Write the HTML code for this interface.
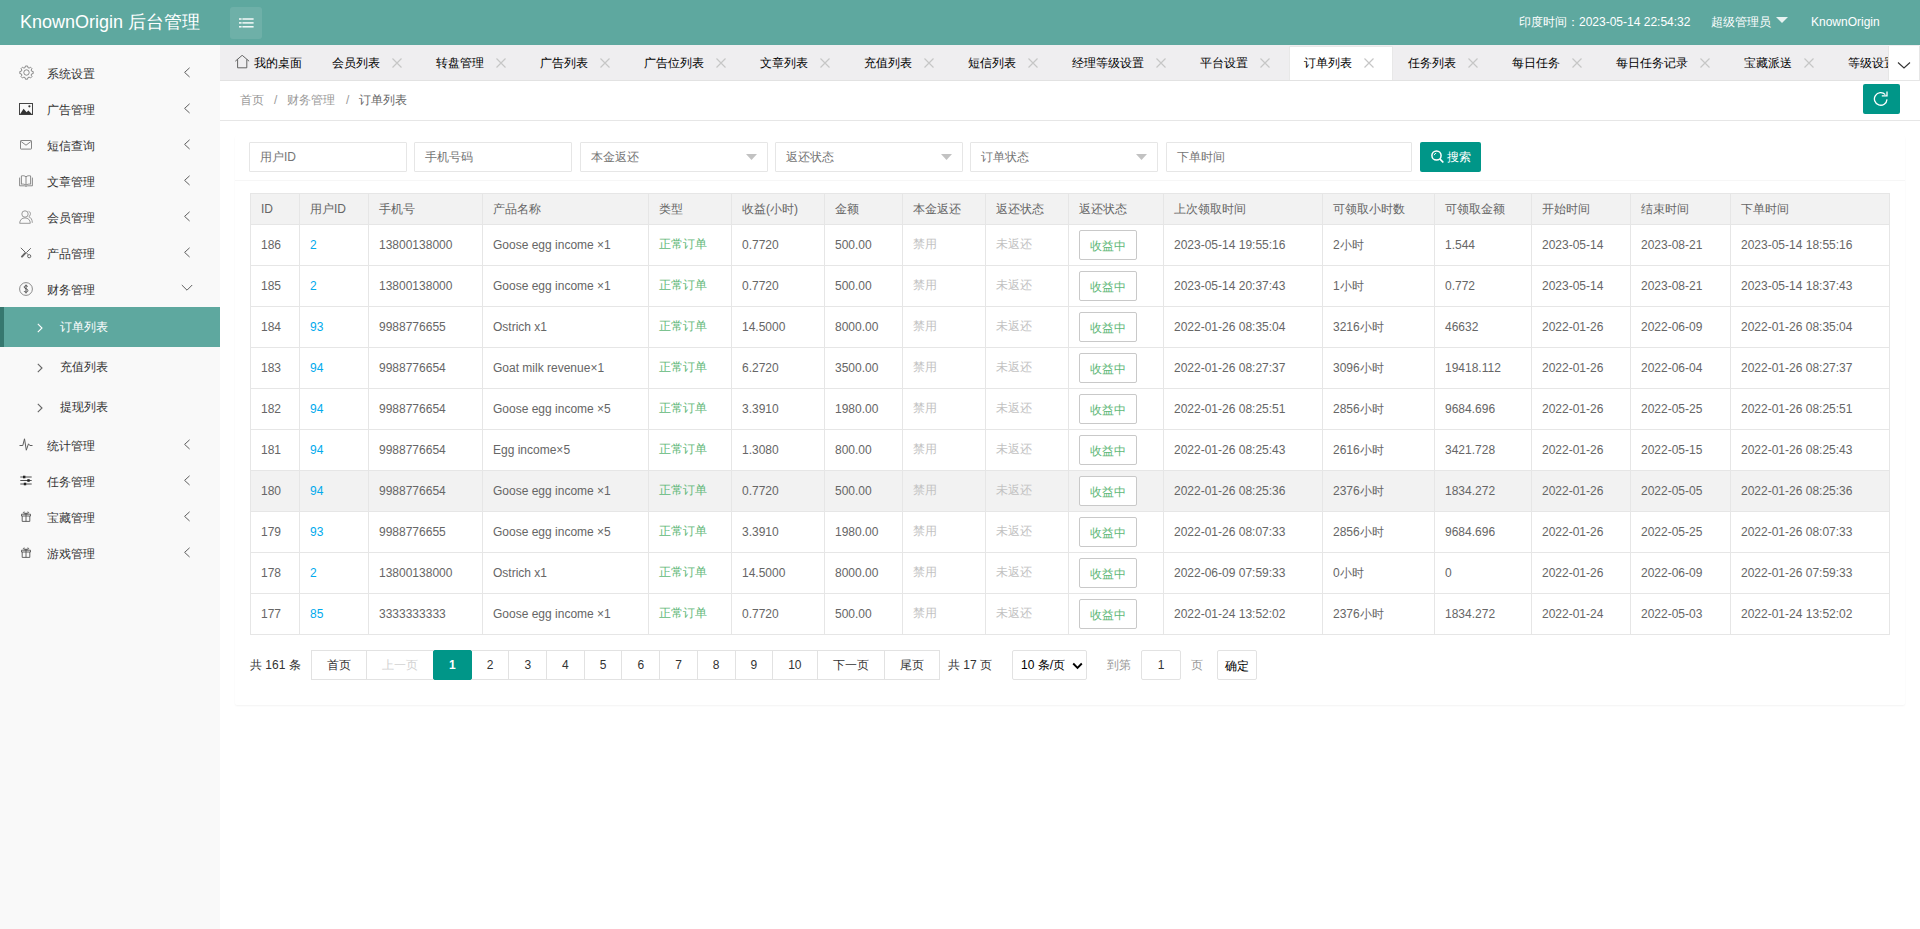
<!DOCTYPE html>
<html><head><meta charset="utf-8">
<style>
*{box-sizing:border-box;margin:0;padding:0}
html,body{width:1920px;height:929px;overflow:hidden;background:#fff;font-family:"Liberation Sans",sans-serif;font-size:12px;color:#666}
.abs{position:absolute}
#hdr{position:absolute;left:0;top:0;width:1920px;height:45px;background:#5ea89f}
#logo{position:absolute;left:20px;top:0;line-height:45px;font-size:18px;color:#fff;white-space:nowrap}
#tog{position:absolute;left:230px;top:7px;width:32px;height:32px;border-radius:3px;background:rgba(255,255,255,.1)}
#htime{position:absolute;left:1519px;top:0;line-height:45px;color:#fff;white-space:nowrap}
#hadm{position:absolute;left:1711px;top:0;line-height:45px;color:#fff;white-space:nowrap}
#hko{position:absolute;left:1811px;top:0;line-height:45px;color:#fff;white-space:nowrap}
#side{position:absolute;left:0;top:45px;width:220px;height:884px;background:#f9f9f9}
.mi{position:absolute;left:0;width:220px;height:36px;line-height:36px;color:#333;white-space:nowrap}
.mi .t{position:absolute;left:47px;top:1px}
.mi svg.ic{position:absolute;left:19px}
.mi .chev{position:absolute;left:183px;top:12px;width:8px;height:11px}
.si{position:absolute;left:0;width:220px;height:40px;line-height:40px;color:#333;white-space:nowrap}
.si .t{position:absolute;left:60px;top:0}
.si svg{position:absolute;left:37px;top:16px}
.si.on{background:#5ea89f;color:#fff}
.si.on:before{content:"";position:absolute;left:0;top:0;width:4px;height:40px;background:#36786f}
#tabs{position:absolute;left:220px;top:45px;width:1700px;height:36px;background:#efeef0;border-bottom:1px solid #e2e2e2;overflow:hidden}
.tab{position:absolute;top:0;height:35px;line-height:36px;color:#000;white-space:nowrap}
.tab.on{background:#fff;top:1px;height:34px;line-height:32px;border:1px solid #e8e8e8;border-bottom:none}
.tab .x{position:absolute;top:13px;width:10px;height:10px}
#tabdd{position:absolute;left:1888px;top:46px;width:32px;height:35px;background:#fff;border:1px solid #e6e6e6;border-top:none}
#bc{position:absolute;left:220px;top:81px;width:1700px;height:40px;border-bottom:1px solid #e6e6e6;background:#fff}
#bc span{position:absolute;top:0;line-height:38px;white-space:nowrap}
#refresh{position:absolute;left:1863px;top:84px;width:37px;height:30px;background:#009688;border-radius:2px}

.inp{position:absolute;top:142px;height:30px;border:1px solid #e6e6e6;border-radius:1px;background:#fff}
.inp span{position:absolute;left:10px;top:0;line-height:28px;color:#757575;white-space:nowrap}
#sbtn{position:absolute;left:1420px;top:142px;width:61px;height:30px;background:#009688;border-radius:2px;color:#fff}
#sbtn span{position:absolute;left:27px;top:0;line-height:30px}
.hl{position:absolute;left:250px;width:1640px;height:1px;background:#e6e6e6}
.vl{position:absolute;top:193px;width:1px;height:442px;background:#e6e6e6}
.th{position:absolute;top:193px;line-height:31px;color:#666;white-space:nowrap}
.td{position:absolute;line-height:41px;color:#666;white-space:nowrap}
.lk{color:#01aaed}.gr{color:#5fb878}.lt{color:#c2c2c2}
.rbtn{position:absolute;width:58px;height:30px;line-height:30px;border:1px solid #c9c9c9;border-radius:2px;background:#fff;color:#5fb878;text-align:center;white-space:nowrap}
.pg{position:absolute;top:650px;height:30px;line-height:28px;border:1px solid #e2e2e2;background:#fff;color:#333;text-align:center;white-space:nowrap}
#pager{position:absolute;left:311px;top:650px;height:30px;display:flex;white-space:nowrap}
#pager .p{display:block;height:30px;line-height:28px;padding:0 15px;border:1px solid #e2e2e2;margin-right:-1px;color:#333;background:#fff}
#pager .p.dis{color:#d2d2d2}
#pager .p.cur{background:#009688;border-color:#009688;color:#fff;border-radius:2px;font-weight:bold;position:relative}
#limit{position:absolute;left:1012px;top:650px;width:75px;height:30px;line-height:28px;border:1px solid #e2e2e2;border-radius:2px;color:#000;padding-left:8px;white-space:nowrap;background:#fff}
#skipinp{position:absolute;left:1141px;top:650px;width:40px;height:30px;line-height:28px;border:1px solid #e2e2e2;border-radius:2px;text-align:center;color:#333}
#skipbtn{position:absolute;left:1217px;top:650px;width:40px;height:30px;line-height:30px;border:1px solid #e2e2e2;border-radius:2px;text-align:center;color:#000}
</style></head><body>
<div id="hdr">
  <div id="logo">KnownOrigin 后台管理</div>
  <div id="tog"><svg class="abs" style="left:9px;top:11px" width="15" height="10" viewBox="0 0 15 10"><g fill="#fff"><rect x="0" y="0.3" width="2.6" height="1.4"/><rect x="3.4" y="0.3" width="11.2" height="1.4"/><rect x="0" y="4.2" width="2.6" height="1.4"/><rect x="3.4" y="4.2" width="11.2" height="1.4"/><rect x="0" y="8.1" width="2.6" height="1.4"/><rect x="3.4" y="8.1" width="11.2" height="1.4"/></g></svg></div>
  <div id="htime">印度时间：2023-05-14 22:54:32</div>
  <div id="hadm">超级管理员</div>
  <svg class="abs" style="left:1776px;top:17px" width="12" height="6" viewBox="0 0 12 6"><path d="M0 0H12L6 6Z" fill="#fff" fill-opacity="0.85"/></svg>
  <div id="hko">KnownOrigin</div>
</div>
<div id="side"></div>
<div class="mi" style="top:55px"><svg class="ic" style="top:10px" width="15" height="15" viewBox="0 0 15 15"><path d="M6.4 1H8.6L8.9 2.6L10.1 3.1L11.5 2.2L13 3.7L12.1 5L12.6 6.2L14.2 6.5V8.6L12.6 8.9L12.1 10.1L13 11.5L11.5 13L10.1 12.1L8.9 12.6L8.6 14.2H6.4L6.1 12.6L4.9 12.1L3.5 13L2 11.5L2.9 10.1L2.4 8.9L0.8 8.6V6.5L2.4 6.2L2.9 5L2 3.7L3.5 2.2L4.9 3.1L6.1 2.6Z" fill="none" stroke="#777" stroke-width="0.85"/><circle cx="7.5" cy="7.5" r="2.7" fill="none" stroke="#777" stroke-width="0.85"/></svg><span class="t">系统设置</span><svg class="chev" viewBox="0 0 8 11"><path d="M6.6 0.8L1.6 5.4L6.6 10" fill="none" stroke="#555" stroke-width="0.95"/></svg></div>
<div class="mi" style="top:91px"><svg class="ic" style="top:12px" width="14" height="12" viewBox="0 0 14 12"><rect x="0.5" y="0.5" width="13" height="11" fill="none" stroke="#444" stroke-width="1"/><path d="M1 11.2L4.6 5.8L7.6 9.2L9.4 7.4L13 11.2Z" fill="#333"/><circle cx="10.4" cy="3.3" r="1.1" fill="#333"/></svg><span class="t">广告管理</span><svg class="chev" viewBox="0 0 8 11"><path d="M6.6 0.8L1.6 5.4L6.6 10" fill="none" stroke="#555" stroke-width="0.95"/></svg></div>
<div class="mi" style="top:127px"><svg class="ic" style="left:20px;top:13px" width="12" height="10" viewBox="0 0 12 10"><rect x="0.5" y="0.5" width="11" height="8.6" rx="0.6" fill="none" stroke="#777" stroke-width="0.9"/><path d="M1.2 1.6L6 5.2L10.8 1.6" fill="none" stroke="#777" stroke-width="0.9"/></svg><span class="t">短信查询</span><svg class="chev" viewBox="0 0 8 11"><path d="M6.6 0.8L1.6 5.4L6.6 10" fill="none" stroke="#555" stroke-width="0.95"/></svg></div>
<div class="mi" style="top:163px"><svg class="ic" style="top:12px" width="14" height="12" viewBox="0 0 14 12"><path d="M7 1.8C5.6 0.6 3.8 0.5 2.4 0.9V9.2C3.8 8.9 5.6 9.1 7 10.2C8.4 9.1 10.2 8.9 11.6 9.2V0.9C10.2 0.5 8.4 0.6 7 1.8ZM7 1.8V10.2" fill="none" stroke="#777" stroke-width="0.85"/><path d="M0.6 2.6V10.8H5.4L7 11.4L8.6 10.8H13.4V2.6" fill="none" stroke="#777" stroke-width="0.85"/></svg><span class="t">文章管理</span><svg class="chev" viewBox="0 0 8 11"><path d="M6.6 0.8L1.6 5.4L6.6 10" fill="none" stroke="#555" stroke-width="0.95"/></svg></div>
<div class="mi" style="top:199px"><svg class="ic" style="top:11px" width="14" height="14" viewBox="0 0 14 14"><circle cx="6" cy="4" r="3.2" fill="none" stroke="#888" stroke-width="0.85"/><path d="M0.7 13.3C0.7 9.9 3 7.9 6 7.9C9 7.9 11.3 9.9 11.3 13.3Z" fill="none" stroke="#888" stroke-width="0.85"/><path d="M9.6 1.3C11.2 1.8 11.7 3.3 11.3 4.6C11.1 5.5 10.5 6.3 9.8 6.7C11.9 7.5 13.3 9.6 13.3 12.8" fill="none" stroke="#888" stroke-width="0.85"/></svg><span class="t">会员管理</span><svg class="chev" viewBox="0 0 8 11"><path d="M6.6 0.8L1.6 5.4L6.6 10" fill="none" stroke="#555" stroke-width="0.95"/></svg></div>
<div class="mi" style="top:235px"><svg class="ic" style="left:20px;top:12px" width="12" height="12" viewBox="0 0 12 12"><path d="M0.8 0.8L5.6 5.6" stroke="#666" stroke-width="1"/><path d="M5 6.4L2 9.6" stroke="#666" stroke-width="2" stroke-linecap="round"/><path d="M10.8 1.2L6.4 5.6L7.8 7.6" stroke="#666" stroke-width="1" fill="none"/><circle cx="9.2" cy="9.2" r="1.6" fill="none" stroke="#666" stroke-width="1"/></svg><span class="t">产品管理</span><svg class="chev" viewBox="0 0 8 11"><path d="M6.6 0.8L1.6 5.4L6.6 10" fill="none" stroke="#555" stroke-width="0.95"/></svg></div>
<div class="mi" style="top:271px"><svg class="ic" style="top:11px" width="14" height="14" viewBox="0 0 14 14"><circle cx="7" cy="7" r="6.4" fill="none" stroke="#777" stroke-width="0.85"/><path d="M8.8 4.6C8.5 4 7.8 3.7 7 3.7C6 3.7 5.2 4.2 5.2 5.1C5.2 7 8.9 6.3 8.9 8.6C8.9 9.6 8 10.2 7 10.2C6 10.2 5.3 9.8 5 9.1M7 2.6V11.4" fill="none" stroke="#555" stroke-width="1"/></svg><span class="t">财务管理</span><svg class="chev" style="left:181px;top:13px;width:12px;height:8px" viewBox="0 0 12 8"><path d="M0.8 1L6 6.2L11.2 1" fill="none" stroke="#555" stroke-width="0.95"/></svg></div>
<div class="mi" style="top:427px"><svg class="ic" style="top:11px" width="14" height="14" viewBox="0 0 14 14"><path d="M0.5 7.5H3.8L5.5 0.8L7.3 12.2L9.5 5.8L10.8 7.5H13.5" fill="none" stroke="#555" stroke-width="0.95"/></svg><span class="t">统计管理</span><svg class="chev" viewBox="0 0 8 11"><path d="M6.6 0.8L1.6 5.4L6.6 10" fill="none" stroke="#555" stroke-width="0.95"/></svg></div>
<div class="mi" style="top:463px"><svg class="ic" style="left:20px;top:12px" width="12" height="12" viewBox="0 0 12 12"><path d="M0.3 2H11.7M0.3 5.5H11.7M0.3 9H11.7" stroke="#444" stroke-width="0.95"/><rect x="3" y="0.7" width="2.4" height="2.6" fill="#222"/><rect x="7.3" y="4.2" width="2.4" height="2.6" fill="#222"/><rect x="3.8" y="7.7" width="2.4" height="2.6" fill="#222"/></svg><span class="t">任务管理</span><svg class="chev" viewBox="0 0 8 11"><path d="M6.6 0.8L1.6 5.4L6.6 10" fill="none" stroke="#555" stroke-width="0.95"/></svg></div>
<div class="mi" style="top:499px"><svg class="ic" style="left:21px;top:12px" width="10" height="11" viewBox="0 0 10 11"><path d="M0.5 3.2H9.5V5H0.5Z" fill="none" stroke="#555" stroke-width="0.9"/><path d="M1.2 5V10.4H8.8V5M5 3.2V10.4" fill="none" stroke="#555" stroke-width="0.9"/><path d="M5 3C4.2 1 2.6 0.6 2.4 1.4C2.2 2.3 3.6 2.9 5 3C6.4 2.9 7.8 2.3 7.6 1.4C7.4 0.6 5.8 1 5 3" fill="none" stroke="#555" stroke-width="0.85"/></svg><span class="t">宝藏管理</span><svg class="chev" viewBox="0 0 8 11"><path d="M6.6 0.8L1.6 5.4L6.6 10" fill="none" stroke="#555" stroke-width="0.95"/></svg></div>
<div class="mi" style="top:535px"><svg class="ic" style="left:21px;top:12px" width="10" height="11" viewBox="0 0 10 11"><path d="M0.5 3.2H9.5V5H0.5Z" fill="none" stroke="#555" stroke-width="0.9"/><path d="M1.2 5V10.4H8.8V5M5 3.2V10.4" fill="none" stroke="#555" stroke-width="0.9"/><path d="M5 3C4.2 1 2.6 0.6 2.4 1.4C2.2 2.3 3.6 2.9 5 3C6.4 2.9 7.8 2.3 7.6 1.4C7.4 0.6 5.8 1 5 3" fill="none" stroke="#555" stroke-width="0.85"/></svg><span class="t">游戏管理</span><svg class="chev" viewBox="0 0 8 11"><path d="M6.6 0.8L1.6 5.4L6.6 10" fill="none" stroke="#555" stroke-width="0.95"/></svg></div>
<div class="si on" style="top:307px"><svg width="6" height="10" viewBox="0 0 6 10"><path d="M0.8 0.8L5 5L0.8 9.2" fill="none" stroke="#fff" stroke-width="1.1"/></svg><span class="t">订单列表</span></div>
<div class="si" style="top:347px"><svg width="6" height="10" viewBox="0 0 6 10"><path d="M0.8 0.8L5 5L0.8 9.2" fill="none" stroke="#666" stroke-width="1.1"/></svg><span class="t">充值列表</span></div>
<div class="si" style="top:387px"><svg width="6" height="10" viewBox="0 0 6 10"><path d="M0.8 0.8L5 5L0.8 9.2" fill="none" stroke="#666" stroke-width="1.1"/></svg><span class="t">提现列表</span></div>
<div id="tabs">
<div class="tab" style="left:16px"><svg class="abs" style="left:-1px;top:10px" width="15" height="14" viewBox="0 0 15 14"><path d="M0.3 6.2L7.2 0.3L14.1 6.2M2.6 4.4V12.8H11.8V4.4" fill="none" stroke="#555" stroke-width="0.9"/></svg><span class="abs" style="left:18px">我的桌面</span></div>
<div class="tab" style="left:112px;width:98px"><span class="abs" style="left:0">会员列表</span><svg class="x" style="left:60px" viewBox="0 0 10 10"><path d="M0.5 0.5L9.5 9.5M9.5 0.5L0.5 9.5" stroke="#c6c6c6" stroke-width="1.15"/></svg></div>
<div class="tab" style="left:216px;width:98px"><span class="abs" style="left:0">转盘管理</span><svg class="x" style="left:60px" viewBox="0 0 10 10"><path d="M0.5 0.5L9.5 9.5M9.5 0.5L0.5 9.5" stroke="#c6c6c6" stroke-width="1.15"/></svg></div>
<div class="tab" style="left:320px;width:98px"><span class="abs" style="left:0">广告列表</span><svg class="x" style="left:60px" viewBox="0 0 10 10"><path d="M0.5 0.5L9.5 9.5M9.5 0.5L0.5 9.5" stroke="#c6c6c6" stroke-width="1.15"/></svg></div>
<div class="tab" style="left:424px;width:110px"><span class="abs" style="left:0">广告位列表</span><svg class="x" style="left:72px" viewBox="0 0 10 10"><path d="M0.5 0.5L9.5 9.5M9.5 0.5L0.5 9.5" stroke="#c6c6c6" stroke-width="1.15"/></svg></div>
<div class="tab" style="left:540px;width:98px"><span class="abs" style="left:0">文章列表</span><svg class="x" style="left:60px" viewBox="0 0 10 10"><path d="M0.5 0.5L9.5 9.5M9.5 0.5L0.5 9.5" stroke="#c6c6c6" stroke-width="1.15"/></svg></div>
<div class="tab" style="left:644px;width:98px"><span class="abs" style="left:0">充值列表</span><svg class="x" style="left:60px" viewBox="0 0 10 10"><path d="M0.5 0.5L9.5 9.5M9.5 0.5L0.5 9.5" stroke="#c6c6c6" stroke-width="1.15"/></svg></div>
<div class="tab" style="left:748px;width:98px"><span class="abs" style="left:0">短信列表</span><svg class="x" style="left:60px" viewBox="0 0 10 10"><path d="M0.5 0.5L9.5 9.5M9.5 0.5L0.5 9.5" stroke="#c6c6c6" stroke-width="1.15"/></svg></div>
<div class="tab" style="left:852px;width:122px"><span class="abs" style="left:0">经理等级设置</span><svg class="x" style="left:84px" viewBox="0 0 10 10"><path d="M0.5 0.5L9.5 9.5M9.5 0.5L0.5 9.5" stroke="#c6c6c6" stroke-width="1.15"/></svg></div>
<div class="tab" style="left:980px;width:98px"><span class="abs" style="left:0">平台设置</span><svg class="x" style="left:60px" viewBox="0 0 10 10"><path d="M0.5 0.5L9.5 9.5M9.5 0.5L0.5 9.5" stroke="#c6c6c6" stroke-width="1.15"/></svg></div>
<div class="tab on" style="left:1069px;width:104px"><span class="abs" style="left:14px;top:0">订单列表</span><svg class="x" style="left:74px;top:11px" viewBox="0 0 10 10"><path d="M0.5 0.5L9.5 9.5M9.5 0.5L0.5 9.5" stroke="#c6c6c6" stroke-width="1.15"/></svg></div>
<div class="tab" style="left:1188px;width:98px"><span class="abs" style="left:0">任务列表</span><svg class="x" style="left:60px" viewBox="0 0 10 10"><path d="M0.5 0.5L9.5 9.5M9.5 0.5L0.5 9.5" stroke="#c6c6c6" stroke-width="1.15"/></svg></div>
<div class="tab" style="left:1292px;width:98px"><span class="abs" style="left:0">每日任务</span><svg class="x" style="left:60px" viewBox="0 0 10 10"><path d="M0.5 0.5L9.5 9.5M9.5 0.5L0.5 9.5" stroke="#c6c6c6" stroke-width="1.15"/></svg></div>
<div class="tab" style="left:1396px;width:122px"><span class="abs" style="left:0">每日任务记录</span><svg class="x" style="left:84px" viewBox="0 0 10 10"><path d="M0.5 0.5L9.5 9.5M9.5 0.5L0.5 9.5" stroke="#c6c6c6" stroke-width="1.15"/></svg></div>
<div class="tab" style="left:1524px;width:98px"><span class="abs" style="left:0">宝藏派送</span><svg class="x" style="left:60px" viewBox="0 0 10 10"><path d="M0.5 0.5L9.5 9.5M9.5 0.5L0.5 9.5" stroke="#c6c6c6" stroke-width="1.15"/></svg></div>
<div class="tab" style="left:1628px;width:98px"><span class="abs" style="left:0">等级设置</span><svg class="x" style="left:60px" viewBox="0 0 10 10"><path d="M0.5 0.5L9.5 9.5M9.5 0.5L0.5 9.5" stroke="#c6c6c6" stroke-width="1.15"/></svg></div>
</div>
<div id="tabdd"><svg class="abs" style="left:8px;top:15px" width="14" height="9" viewBox="0 0 14 9"><path d="M1 1.5L7 7L13 1.5" stroke="#333" stroke-width="1.1" fill="none"/></svg></div>
<div id="bc"><span style="left:20px;color:#999">首页</span><span style="left:54px;color:#999">/</span><span style="left:67px;color:#999">财务管理</span><span style="left:126px;color:#999">/</span><span style="left:139px;color:#666">订单列表</span></div>
<div id="refresh"><svg class="abs" style="left:10px;top:6px" width="16" height="16" viewBox="0 0 16 16"><path d="M14 9.4A6.3 6.3 0 1 1 12.3 4.6" stroke="#fff" stroke-width="1.3" fill="none"/><path d="M8.8 5.9H14V1.6" stroke="#fff" stroke-width="1.3" fill="none"/></svg></div>
<!--CONTENT-->
<div id="card" style="position:absolute;left:235px;top:136px;width:1670px;height:569px;background:#fff;border-radius:2px;box-shadow:0 1px 2px 0 rgba(0,0,0,.05)"></div>
<div style="position:absolute;left:235px;top:180px;width:1670px;height:1px;background:#f6f6f6"></div>
<div class="inp" style="left:249px;width:158px"><span>用户ID</span></div>
<div class="inp" style="left:414px;width:158px"><span>手机号码</span></div>
<div class="inp" style="left:580px;width:188px"><span>本金返还</span><svg class="abs" style="left:165px;top:11px" width="11" height="6" viewBox="0 0 11 6"><path d="M0 0H11L5.5 6Z" fill="#c2c2c2"/></svg></div>
<div class="inp" style="left:775px;width:188px"><span>返还状态</span><svg class="abs" style="left:165px;top:11px" width="11" height="6" viewBox="0 0 11 6"><path d="M0 0H11L5.5 6Z" fill="#c2c2c2"/></svg></div>
<div class="inp" style="left:970px;width:188px"><span>订单状态</span><svg class="abs" style="left:165px;top:11px" width="11" height="6" viewBox="0 0 11 6"><path d="M0 0H11L5.5 6Z" fill="#c2c2c2"/></svg></div>
<div class="inp" style="left:1166px;width:246px"><span>下单时间</span></div>
<div id="sbtn"><svg class="abs" style="left:11px;top:8px" width="13" height="14" viewBox="0 0 13 14"><circle cx="5.5" cy="5.5" r="4.6" fill="none" stroke="#fff" stroke-width="1.5"/><path d="M8.8 8.8L12.3 12.5" stroke="#fff" stroke-width="1.7"/><path d="M3.2 5.2A2.4 2.4 0 0 1 5.2 3.2" stroke="#fff" stroke-width="0.9" fill="none"/></svg><span>搜索</span></div>
<div style="position:absolute;left:250px;top:193px;width:1640px;height:31px;background:#f2f2f2"></div>
<div style="position:absolute;left:250px;top:470px;width:1640px;height:41px;background:#f2f2f2"></div>
<div class="hl" style="top:193px"></div>
<div class="hl" style="top:224px"></div>
<div class="hl" style="top:265px"></div>
<div class="hl" style="top:306px"></div>
<div class="hl" style="top:347px"></div>
<div class="hl" style="top:388px"></div>
<div class="hl" style="top:429px"></div>
<div class="hl" style="top:470px"></div>
<div class="hl" style="top:511px"></div>
<div class="hl" style="top:552px"></div>
<div class="hl" style="top:593px"></div>
<div class="hl" style="top:634px"></div>
<div class="vl" style="left:250px"></div>
<div class="vl" style="left:299px"></div>
<div class="vl" style="left:368px"></div>
<div class="vl" style="left:482px"></div>
<div class="vl" style="left:648px"></div>
<div class="vl" style="left:731px"></div>
<div class="vl" style="left:824px"></div>
<div class="vl" style="left:902px"></div>
<div class="vl" style="left:985px"></div>
<div class="vl" style="left:1068px"></div>
<div class="vl" style="left:1163px"></div>
<div class="vl" style="left:1322px"></div>
<div class="vl" style="left:1434px"></div>
<div class="vl" style="left:1531px"></div>
<div class="vl" style="left:1630px"></div>
<div class="vl" style="left:1730px"></div>
<div class="vl" style="left:1889px"></div>
<div class="th" style="left:261px;top:194px">ID</div>
<div class="th" style="left:310px;top:194px">用户ID</div>
<div class="th" style="left:379px;top:194px">手机号</div>
<div class="th" style="left:493px;top:194px">产品名称</div>
<div class="th" style="left:659px;top:194px">类型</div>
<div class="th" style="left:742px;top:194px">收益(小时)</div>
<div class="th" style="left:835px;top:194px">金额</div>
<div class="th" style="left:913px;top:194px">本金返还</div>
<div class="th" style="left:996px;top:194px">返还状态</div>
<div class="th" style="left:1079px;top:194px">返还状态</div>
<div class="th" style="left:1174px;top:194px">上次领取时间</div>
<div class="th" style="left:1333px;top:194px">可领取小时数</div>
<div class="th" style="left:1445px;top:194px">可领取金额</div>
<div class="th" style="left:1542px;top:194px">开始时间</div>
<div class="th" style="left:1641px;top:194px">结束时间</div>
<div class="th" style="left:1741px;top:194px">下单时间</div>
<div class="td" style="left:261px;top:225px">186</div>
<div class="td" style="left:310px;top:225px"><span class="lk">2</span></div>
<div class="td" style="left:379px;top:225px">13800138000</div>
<div class="td" style="left:493px;top:225px">Goose egg income ×1</div>
<div class="td" style="left:659px;top:224px"><span class="gr">正常订单</span></div>
<div class="td" style="left:742px;top:225px">0.7720</div>
<div class="td" style="left:835px;top:225px">500.00</div>
<div class="td" style="left:913px;top:224px"><span class="lt">禁用</span></div>
<div class="td" style="left:996px;top:224px"><span class="lt">未返还</span></div>
<div class="rbtn" style="left:1079px;top:230px">收益中</div>
<div class="td" style="left:1174px;top:225px">2023-05-14 19:55:16</div>
<div class="td" style="left:1333px;top:225px">2小时</div>
<div class="td" style="left:1445px;top:225px">1.544</div>
<div class="td" style="left:1542px;top:225px">2023-05-14</div>
<div class="td" style="left:1641px;top:225px">2023-08-21</div>
<div class="td" style="left:1741px;top:225px">2023-05-14 18:55:16</div>
<div class="td" style="left:261px;top:266px">185</div>
<div class="td" style="left:310px;top:266px"><span class="lk">2</span></div>
<div class="td" style="left:379px;top:266px">13800138000</div>
<div class="td" style="left:493px;top:266px">Goose egg income ×1</div>
<div class="td" style="left:659px;top:265px"><span class="gr">正常订单</span></div>
<div class="td" style="left:742px;top:266px">0.7720</div>
<div class="td" style="left:835px;top:266px">500.00</div>
<div class="td" style="left:913px;top:265px"><span class="lt">禁用</span></div>
<div class="td" style="left:996px;top:265px"><span class="lt">未返还</span></div>
<div class="rbtn" style="left:1079px;top:271px">收益中</div>
<div class="td" style="left:1174px;top:266px">2023-05-14 20:37:43</div>
<div class="td" style="left:1333px;top:266px">1小时</div>
<div class="td" style="left:1445px;top:266px">0.772</div>
<div class="td" style="left:1542px;top:266px">2023-05-14</div>
<div class="td" style="left:1641px;top:266px">2023-08-21</div>
<div class="td" style="left:1741px;top:266px">2023-05-14 18:37:43</div>
<div class="td" style="left:261px;top:307px">184</div>
<div class="td" style="left:310px;top:307px"><span class="lk">93</span></div>
<div class="td" style="left:379px;top:307px">9988776655</div>
<div class="td" style="left:493px;top:307px">Ostrich x1</div>
<div class="td" style="left:659px;top:306px"><span class="gr">正常订单</span></div>
<div class="td" style="left:742px;top:307px">14.5000</div>
<div class="td" style="left:835px;top:307px">8000.00</div>
<div class="td" style="left:913px;top:306px"><span class="lt">禁用</span></div>
<div class="td" style="left:996px;top:306px"><span class="lt">未返还</span></div>
<div class="rbtn" style="left:1079px;top:312px">收益中</div>
<div class="td" style="left:1174px;top:307px">2022-01-26 08:35:04</div>
<div class="td" style="left:1333px;top:307px">3216小时</div>
<div class="td" style="left:1445px;top:307px">46632</div>
<div class="td" style="left:1542px;top:307px">2022-01-26</div>
<div class="td" style="left:1641px;top:307px">2022-06-09</div>
<div class="td" style="left:1741px;top:307px">2022-01-26 08:35:04</div>
<div class="td" style="left:261px;top:348px">183</div>
<div class="td" style="left:310px;top:348px"><span class="lk">94</span></div>
<div class="td" style="left:379px;top:348px">9988776654</div>
<div class="td" style="left:493px;top:348px">Goat milk revenue×1</div>
<div class="td" style="left:659px;top:347px"><span class="gr">正常订单</span></div>
<div class="td" style="left:742px;top:348px">6.2720</div>
<div class="td" style="left:835px;top:348px">3500.00</div>
<div class="td" style="left:913px;top:347px"><span class="lt">禁用</span></div>
<div class="td" style="left:996px;top:347px"><span class="lt">未返还</span></div>
<div class="rbtn" style="left:1079px;top:353px">收益中</div>
<div class="td" style="left:1174px;top:348px">2022-01-26 08:27:37</div>
<div class="td" style="left:1333px;top:348px">3096小时</div>
<div class="td" style="left:1445px;top:348px">19418.112</div>
<div class="td" style="left:1542px;top:348px">2022-01-26</div>
<div class="td" style="left:1641px;top:348px">2022-06-04</div>
<div class="td" style="left:1741px;top:348px">2022-01-26 08:27:37</div>
<div class="td" style="left:261px;top:389px">182</div>
<div class="td" style="left:310px;top:389px"><span class="lk">94</span></div>
<div class="td" style="left:379px;top:389px">9988776654</div>
<div class="td" style="left:493px;top:389px">Goose egg income ×5</div>
<div class="td" style="left:659px;top:388px"><span class="gr">正常订单</span></div>
<div class="td" style="left:742px;top:389px">3.3910</div>
<div class="td" style="left:835px;top:389px">1980.00</div>
<div class="td" style="left:913px;top:388px"><span class="lt">禁用</span></div>
<div class="td" style="left:996px;top:388px"><span class="lt">未返还</span></div>
<div class="rbtn" style="left:1079px;top:394px">收益中</div>
<div class="td" style="left:1174px;top:389px">2022-01-26 08:25:51</div>
<div class="td" style="left:1333px;top:389px">2856小时</div>
<div class="td" style="left:1445px;top:389px">9684.696</div>
<div class="td" style="left:1542px;top:389px">2022-01-26</div>
<div class="td" style="left:1641px;top:389px">2022-05-25</div>
<div class="td" style="left:1741px;top:389px">2022-01-26 08:25:51</div>
<div class="td" style="left:261px;top:430px">181</div>
<div class="td" style="left:310px;top:430px"><span class="lk">94</span></div>
<div class="td" style="left:379px;top:430px">9988776654</div>
<div class="td" style="left:493px;top:430px">Egg income×5</div>
<div class="td" style="left:659px;top:429px"><span class="gr">正常订单</span></div>
<div class="td" style="left:742px;top:430px">1.3080</div>
<div class="td" style="left:835px;top:430px">800.00</div>
<div class="td" style="left:913px;top:429px"><span class="lt">禁用</span></div>
<div class="td" style="left:996px;top:429px"><span class="lt">未返还</span></div>
<div class="rbtn" style="left:1079px;top:435px">收益中</div>
<div class="td" style="left:1174px;top:430px">2022-01-26 08:25:43</div>
<div class="td" style="left:1333px;top:430px">2616小时</div>
<div class="td" style="left:1445px;top:430px">3421.728</div>
<div class="td" style="left:1542px;top:430px">2022-01-26</div>
<div class="td" style="left:1641px;top:430px">2022-05-15</div>
<div class="td" style="left:1741px;top:430px">2022-01-26 08:25:43</div>
<div class="td" style="left:261px;top:471px">180</div>
<div class="td" style="left:310px;top:471px"><span class="lk">94</span></div>
<div class="td" style="left:379px;top:471px">9988776654</div>
<div class="td" style="left:493px;top:471px">Goose egg income ×1</div>
<div class="td" style="left:659px;top:470px"><span class="gr">正常订单</span></div>
<div class="td" style="left:742px;top:471px">0.7720</div>
<div class="td" style="left:835px;top:471px">500.00</div>
<div class="td" style="left:913px;top:470px"><span class="lt">禁用</span></div>
<div class="td" style="left:996px;top:470px"><span class="lt">未返还</span></div>
<div class="rbtn" style="left:1079px;top:476px">收益中</div>
<div class="td" style="left:1174px;top:471px">2022-01-26 08:25:36</div>
<div class="td" style="left:1333px;top:471px">2376小时</div>
<div class="td" style="left:1445px;top:471px">1834.272</div>
<div class="td" style="left:1542px;top:471px">2022-01-26</div>
<div class="td" style="left:1641px;top:471px">2022-05-05</div>
<div class="td" style="left:1741px;top:471px">2022-01-26 08:25:36</div>
<div class="td" style="left:261px;top:512px">179</div>
<div class="td" style="left:310px;top:512px"><span class="lk">93</span></div>
<div class="td" style="left:379px;top:512px">9988776655</div>
<div class="td" style="left:493px;top:512px">Goose egg income ×5</div>
<div class="td" style="left:659px;top:511px"><span class="gr">正常订单</span></div>
<div class="td" style="left:742px;top:512px">3.3910</div>
<div class="td" style="left:835px;top:512px">1980.00</div>
<div class="td" style="left:913px;top:511px"><span class="lt">禁用</span></div>
<div class="td" style="left:996px;top:511px"><span class="lt">未返还</span></div>
<div class="rbtn" style="left:1079px;top:517px">收益中</div>
<div class="td" style="left:1174px;top:512px">2022-01-26 08:07:33</div>
<div class="td" style="left:1333px;top:512px">2856小时</div>
<div class="td" style="left:1445px;top:512px">9684.696</div>
<div class="td" style="left:1542px;top:512px">2022-01-26</div>
<div class="td" style="left:1641px;top:512px">2022-05-25</div>
<div class="td" style="left:1741px;top:512px">2022-01-26 08:07:33</div>
<div class="td" style="left:261px;top:553px">178</div>
<div class="td" style="left:310px;top:553px"><span class="lk">2</span></div>
<div class="td" style="left:379px;top:553px">13800138000</div>
<div class="td" style="left:493px;top:553px">Ostrich x1</div>
<div class="td" style="left:659px;top:552px"><span class="gr">正常订单</span></div>
<div class="td" style="left:742px;top:553px">14.5000</div>
<div class="td" style="left:835px;top:553px">8000.00</div>
<div class="td" style="left:913px;top:552px"><span class="lt">禁用</span></div>
<div class="td" style="left:996px;top:552px"><span class="lt">未返还</span></div>
<div class="rbtn" style="left:1079px;top:558px">收益中</div>
<div class="td" style="left:1174px;top:553px">2022-06-09 07:59:33</div>
<div class="td" style="left:1333px;top:553px">0小时</div>
<div class="td" style="left:1445px;top:553px">0</div>
<div class="td" style="left:1542px;top:553px">2022-01-26</div>
<div class="td" style="left:1641px;top:553px">2022-06-09</div>
<div class="td" style="left:1741px;top:553px">2022-01-26 07:59:33</div>
<div class="td" style="left:261px;top:594px">177</div>
<div class="td" style="left:310px;top:594px"><span class="lk">85</span></div>
<div class="td" style="left:379px;top:594px">3333333333</div>
<div class="td" style="left:493px;top:594px">Goose egg income ×1</div>
<div class="td" style="left:659px;top:593px"><span class="gr">正常订单</span></div>
<div class="td" style="left:742px;top:594px">0.7720</div>
<div class="td" style="left:835px;top:594px">500.00</div>
<div class="td" style="left:913px;top:593px"><span class="lt">禁用</span></div>
<div class="td" style="left:996px;top:593px"><span class="lt">未返还</span></div>
<div class="rbtn" style="left:1079px;top:599px">收益中</div>
<div class="td" style="left:1174px;top:594px">2022-01-24 13:52:02</div>
<div class="td" style="left:1333px;top:594px">2376小时</div>
<div class="td" style="left:1445px;top:594px">1834.272</div>
<div class="td" style="left:1542px;top:594px">2022-01-24</div>
<div class="td" style="left:1641px;top:594px">2022-05-03</div>
<div class="td" style="left:1741px;top:594px">2022-01-24 13:52:02</div>
<div class="pg" style="left:250px;top:651px;border:none;padding:0;background:none">共 161 条</div>
<div id="pager"><a class="p">首页</a><a class="p dis">上一页</a><a class="p cur">1</a><a class="p">2</a><a class="p">3</a><a class="p">4</a><a class="p">5</a><a class="p">6</a><a class="p">7</a><a class="p">8</a><a class="p">9</a><a class="p">10</a><a class="p">下一页</a><a class="p">尾页</a></div>
<div class="pg" style="left:948px;top:651px;border:none;padding:0;background:none">共 17 页</div>
<div id="limit">10 条/页<svg class="abs" style="left:59px;top:11px" width="11" height="8" viewBox="0 0 11 8"><path d="M1.2 1.5L5.5 5.8L9.8 1.5" stroke="#000" stroke-width="1.9" fill="none"/></svg></div>
<div class="pg" style="left:1107px;top:651px;border:none;padding:0;color:#999;background:none">到第</div>
<div id="skipinp">1</div>
<div class="pg" style="left:1191px;top:651px;border:none;padding:0;color:#999;background:none">页</div>
<div id="skipbtn">确定</div>
<!--/CONTENT-->
</body></html>
